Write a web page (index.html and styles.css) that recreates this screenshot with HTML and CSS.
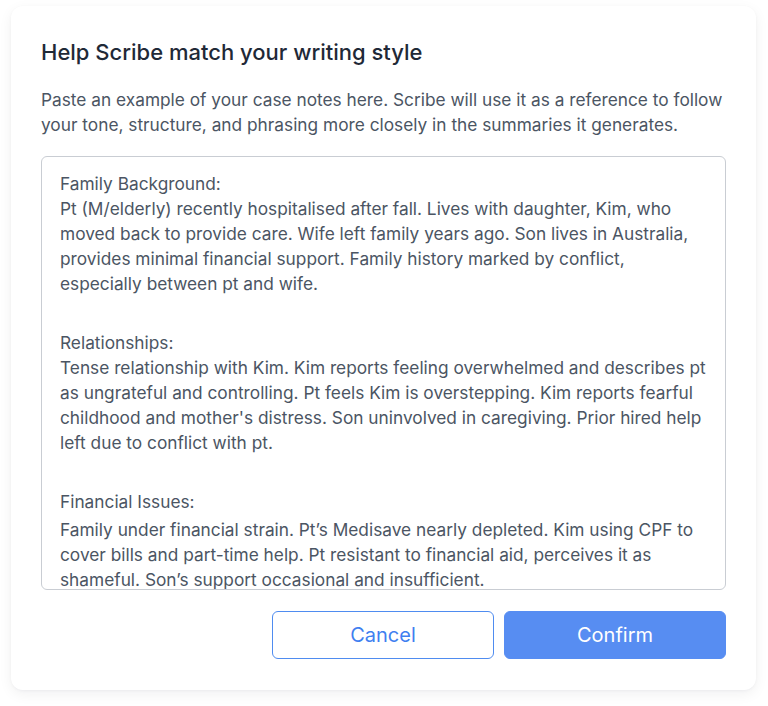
FILE: index.html
```html
<!DOCTYPE html>
<html lang="en">
<head>
<meta charset="utf-8">
<title>Help Scribe match your writing style</title>
<link rel="stylesheet" href="styles.css">
</head>
<body>
<div class="page">
  <div class="card">
    <h1 class="title">Help Scribe match your writing style</h1>
    <p class="desc">Paste an example of your case notes here. Scribe will use it as a reference to follow<br>your tone, structure, and phrasing more closely in the summaries it generates.</p>
    <div class="notes">
      <div class="section">
        <div class="line">Family Background:</div>
        <div class="line">Pt (M/elderly) recently hospitalised after fall. Lives with daughter, Kim, who</div>
        <div class="line">moved back to provide care. Wife left family years ago. Son lives in Australia,</div>
        <div class="line">provides minimal financial support. Family history marked by conflict,</div>
        <div class="line">especially between pt and wife.</div>
      </div>
      <div class="section">
        <div class="line">Relationships:</div>
        <div class="line">Tense relationship with Kim. Kim reports feeling overwhelmed and describes pt</div>
        <div class="line">as ungrateful and controlling. Pt feels Kim is overstepping. Kim reports fearful</div>
        <div class="line">childhood and mother's distress. Son uninvolved in caregiving. Prior hired help</div>
        <div class="line">left due to conflict with pt.</div>
      </div>
      <div class="section">
        <div class="line head-gap">Financial Issues:</div>
        <div class="line">Family under financial strain. Pt’s Medisave nearly depleted. Kim using CPF to</div>
        <div class="line">cover bills and part-time help. Pt resistant to financial aid, perceives it as</div>
        <div class="line">shameful. Son’s support occasional and insufficient.</div>
      </div>
    </div>
    <div class="actions">
      <button class="btn btn-outline" type="button">Cancel</button>
      <button class="btn btn-primary" type="button">Confirm</button>
    </div>
  </div>
</div>
</body>
</html>
```

FILE: styles.css
```css
* { box-sizing: border-box; }

html, body {
  margin: 0;
  padding: 0;
  background: #ffffff;
}

body {
  font-family: "Inter", "Noto Sans", "Liberation Sans", sans-serif;
  -webkit-font-smoothing: antialiased;
}

.page {
  padding: 6px 12px 16px 11px;
}

.card {
  width: 745px;
  height: 684px;
  background: #ffffff;
  border-radius: 12px;
  box-shadow: 0 1px 3px rgba(15, 23, 42, 0.04), 0 4px 14px rgba(15, 23, 42, 0.06);
  padding: 30px 30px 31px 30px;
  display: flex;
  flex-direction: column;
}

.title {
  margin: 0;
  font-size: 22px;
  line-height: 32px;
  font-weight: 500;
  color: #1f2937;
}

.desc {
  margin: 19px 0 0 0;
  font-size: 17.3px;
  line-height: 25px;
  color: #4b5563;
  white-space: nowrap;
}

.notes {
  margin-top: 19px;
  height: 434px;
  flex: none;
  border: 1px solid #c9cdd3;
  border-radius: 6px;
  padding: 14px 18px 0 18px;
  overflow: hidden;
  font-size: 17.3px;
  line-height: 25px;
  color: #4b5563;
}

.line {
  white-space: nowrap;
}

.section + .section {
  margin-top: 34px;
}

.head-gap {
  margin-bottom: 3px;
}

.actions {
  margin-top: 21px;
  display: flex;
  justify-content: flex-end;
  gap: 10px;
}

.btn {
  width: 222px;
  height: 48px;
  border-radius: 6px;
  font-family: inherit;
  font-size: 20px;
  font-weight: 400;
  cursor: pointer;
}

.btn-outline {
  background: #ffffff;
  border: 1px solid #4f8cf0;
  color: #3f7ff0;
}

.btn-primary {
  background: #578df2;
  border: 1px solid #578df2;
  color: #ffffff;
}
```
